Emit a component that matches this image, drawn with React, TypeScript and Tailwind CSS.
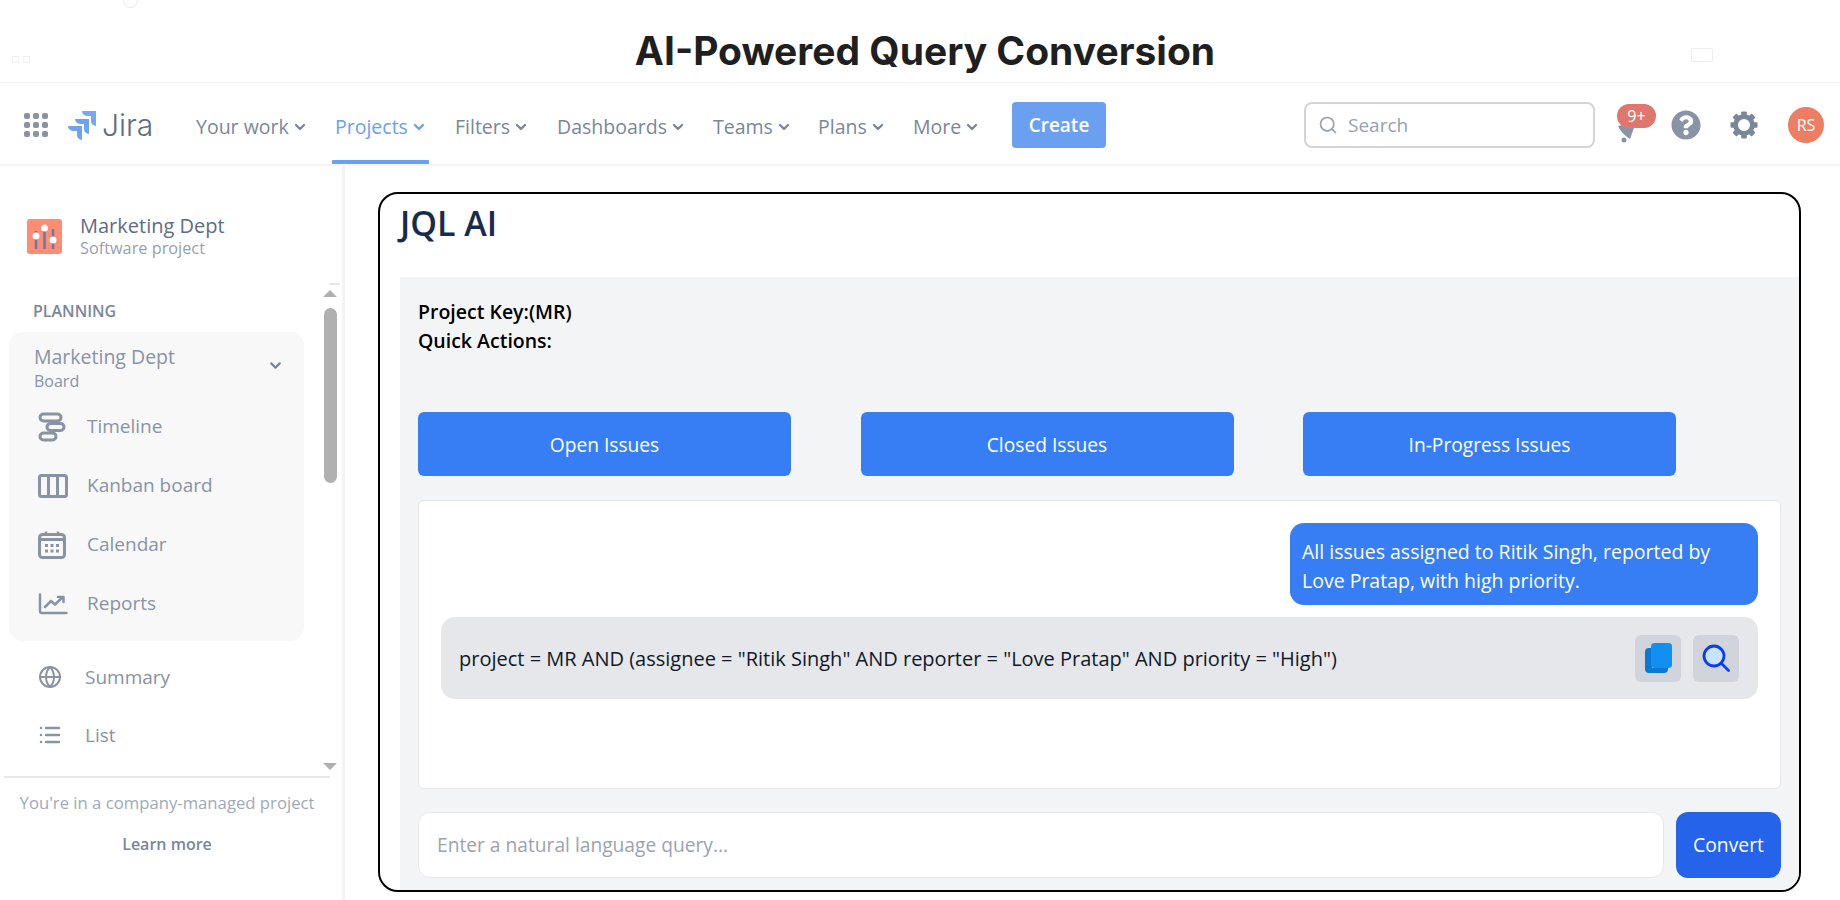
import { ChevronDown, Globe, List, Search } from "lucide-react";
import { FaQuestionCircle } from "react-icons/fa";

const NAV_ITEMS = [
  { label: "Your work", width: "w-[139px]", active: false },
  { label: "Projects", width: "w-[120px]", active: true },
  { label: "Filters", width: "w-[102px]", active: false },
  { label: "Dashboards", width: "w-[156px]", active: false },
  { label: "Teams", width: "w-[105px]", active: false },
  { label: "Plans", width: "w-[95px]", active: false },
  { label: "More", width: "w-[99px]", active: false },
];

function TimelineIcon() {
  return (
    <svg width="28" height="30" viewBox="0 0 28 30" fill="none" stroke="#8993a4" strokeWidth="3">
      <rect x="2" y="2" width="21" height="7" rx="3.5" />
      <rect x="9" y="11.5" width="17" height="7" rx="3.5" />
      <rect x="2" y="21" width="16" height="7" rx="3.5" />
    </svg>
  );
}

function KanbanIcon() {
  return (
    <svg width="30" height="24" viewBox="0 0 30 24" fill="none" stroke="#8993a4" strokeWidth="3">
      <rect x="1.5" y="1.5" width="27" height="21" rx="2" />
      <path d="M10.5 1.5v21M19.5 1.5v21" />
    </svg>
  );
}

function CalendarIcon() {
  return (
    <svg width="28" height="28" viewBox="0 0 28 28" fill="none">
      <path d="M8 0.5v4M20 0.5v4" stroke="#8993a4" strokeWidth="2.5" />
      <rect x="1.5" y="3.5" width="25" height="23" rx="3" stroke="#8993a4" strokeWidth="3" />
      <path d="M1.5 7h25v3h-25z" fill="#8993a4" />
      <g fill="#8993a4">
        <rect x="7" y="13" width="3" height="3" />
        <rect x="12.5" y="13" width="3" height="3" />
        <rect x="18" y="13" width="3" height="3" />
        <rect x="7" y="18.5" width="3" height="3" />
        <rect x="12.5" y="18.5" width="3" height="3" />
        <rect x="18" y="18.5" width="3" height="3" />
      </g>
    </svg>
  );
}

function ReportsIcon() {
  return (
    <svg width="30" height="22" viewBox="0 0 30 22" fill="none" stroke="#8993a4" strokeWidth="2.5" strokeLinecap="round" strokeLinejoin="round">
      <path d="M2 1.5v16.5a2 2 0 0 0 2 2h24.5" />
      <path d="M7 14l6-6 4 3.5 8-7.5M20 4h5.5v5" />
    </svg>
  );
}

function JiraLogo() {
  return (
    <svg width="28" height="29" viewBox="0 0 28 29" fill="#6fa3f2">
      <path d="M14 0h14v15a5 5 0 0 1-5-5V5h-4a5 5 0 0 1-5-5z" opacity="0.95" />
      <path d="M7 8h14v15a5 5 0 0 1-5-5v-5h-4a5 5 0 0 1-5-5z" />
      <path d="M0 15h14v14a5 5 0 0 1-5-5v-4H5a5 5 0 0 1-5-5z" />
    </svg>
  );
}

function ProjectIcon() {
  return (
    <svg width="35" height="35" viewBox="0 0 35 35" className="shrink-0">
      <rect width="35" height="35" rx="3" fill="#ff8c73" />
      <path d="M9 12v18M17.500 6v24M26 10v20" stroke="#5f7ea8" strokeWidth="2.500" />
      <circle cx="9" cy="17" r="3.500" fill="#fff" />
      <circle cx="17.500" cy="9" r="3.500" fill="#fff" />
      <circle cx="26" cy="21" r="3.500" fill="#fff" />
    </svg>
  );
}

function BellIcon() {
  return (
    <svg width="24" height="22" viewBox="0 0 24 22" fill="#8993a4">
      <path d="M2 5l18-4-6 17-3-2C7 13 4 9 2 5z" />
      <circle cx="8" cy="19" r="2.500" />
    </svg>
  );
}

function GearIcon() {
  const teeth = [0, 45, 90, 135, 180, 225, 270, 315];
  return (
    <svg width="28" height="30" viewBox="0 0 30 30" fill="none">
      <circle cx="15" cy="15" r="9" stroke="#7a869a" strokeWidth="5" />
      {teeth.map((deg) => (
        <rect key={deg} x="12" y="0.5" width="6" height="6" rx="1" fill="#7a869a" transform={`rotate(${deg} 15 15)`} />
      ))}
    </svg>
  );
}

function CopyIcon() {
  return (
    <svg width="28" height="30" viewBox="0 0 28 30">
      <path d="M8 5H5a4 4 0 0 0-4 4v17a4 4 0 0 0 4 4h15a4 4 0 0 0 4-4v-1H8z" fill="#0a78d7" />
      <rect x="7" y="0" width="21" height="25" rx="3.500" fill="#1190f2" />
    </svg>
  );
}

function FindIcon() {
  return (
    <svg width="28" height="28" viewBox="0 0 28 28" fill="none">
      <circle cx="12" cy="12" r="10" fill="#c8e4fd" stroke="#0a3cf0" strokeWidth="2.800" />
      <path d="M19.500 19.500l7 7" stroke="#0a3cf0" strokeWidth="2.800" strokeLinecap="round" />
    </svg>
  );
}

function SideRow({ icon, label }: { icon: React.ReactNode; label: string }) {
  return (
    <div className="flex h-[59px] items-center">
      <div className="flex w-[49px] shrink-0 justify-start">{icon}</div>
      <span className="text-[19px] text-[#8993a4]">{label}</span>
    </div>
  );
}

function Sidebar() {
  return (
    <aside className="relative w-[345px] shrink-0 border-r-[3px] border-[#f3f4f6]">
      <div className="flex h-[44px] items-center gap-[18px] pl-[27px] mt-[48px]">
        <ProjectIcon />
        <div>
          <div className="text-[20px] leading-[24px] text-[#5e6c84]">Marketing Dept</div>
          <div className="text-[16.300px] leading-[20px] text-[#97a0af]">Software project</div>
        </div>
      </div>

      <div className="mt-[41px] pl-[33px] text-[16px] leading-[24px] font-semibold text-[#7a869a]">PLANNING</div>

      <div className="ml-[9px] mt-[9px] h-[309px] w-[295px] rounded-[14px] bg-[#f8f8f9] pt-[12px]">
        <div className="relative h-[53px] pl-[25px] text-[#8993a4]">
          <div className="text-[19.500px] leading-[25px]">Marketing Dept</div>
          <div className="text-[16px] leading-[25px]">Board</div>
          <ChevronDown className="absolute right-[20px] top-[13px] h-[17px] w-[17px]" strokeWidth={3} color="#7a869a" />
        </div>
        <div className="pl-[29px]">
          <SideRow icon={<TimelineIcon />} label="Timeline" />
          <SideRow icon={<KanbanIcon />} label="Kanban board" />
          <SideRow icon={<CalendarIcon />} label="Calendar" />
          <SideRow icon={<ReportsIcon />} label="Reports" />
        </div>
      </div>

      <div className="mt-[7px] pl-[38px]">
        <div className="flex h-[58px] items-center">
          <div className="w-[47px] shrink-0"><Globe size={24} color="#8993a4" strokeWidth={2} /></div>
          <span className="text-[19px] text-[#8993a4]">Summary</span>
        </div>
        <div className="flex h-[58px] items-center">
          <div className="w-[47px] shrink-0"><List size={24} color="#8993a4" strokeWidth={2.500} /></div>
          <span className="text-[19px] text-[#8993a4]">List</span>
        </div>
      </div>

      <div className="ml-[4px] mt-[12px] h-[2px] w-[326px] bg-[#e5e7eb]" />
      <div className="mt-[13px] w-[334px] text-center text-[16.700px] leading-[24px] text-[#a0a9b8]">You're in a company-managed project</div>
      <div className="mt-[17px] w-[334px] text-center text-[16px] leading-[24px] font-semibold text-[#7a869a]">Learn more</div>

      {/* fake scrollbar, sits over the nav list */}
      <div className="absolute right-[2px] top-[117px] h-[2px] w-[11px] bg-[#e5e7eb]" />
      <div className="absolute left-[323px] top-[124px] h-0 w-0 border-x-[7px] border-b-[7px] border-x-transparent border-b-[#b0b0b0]" />
      <div className="absolute left-[324px] top-[142px] h-[175px] w-[13px] rounded-full bg-[#b0b0b0]" />
      <div className="absolute left-[323px] top-[597px] h-0 w-0 border-x-[7px] border-t-[7px] border-x-transparent border-t-[#b0b0b0]" />
    </aside>
  );
}

function Header() {
  return (
    <header className="flex h-[83px] shrink-0 items-center border-b-[2px] border-[#f3f4f6] pl-[24px] pt-[3px]">
      <div className="grid w-[24px] grid-cols-3 gap-[3px]">
        {[...Array(9)].map((_, i) => (
          <div key={i} className="h-[6px] w-[6px] rounded-[2px] bg-[#8993a4]" />
        ))}
      </div>
      <div className="ml-[20px]"><JiraLogo /></div>
      <span className="ml-[6px] w-[94px] font-['Inter',sans-serif] text-[30px] font-light text-[#5e6c84]">Jira</span>
      {NAV_ITEMS.map((item) => (
        <div key={item.label} className={`relative flex h-full items-center ${item.width}`}>
          <span className={`flex items-center gap-[3px] pt-[3px] text-[19.500px] ${item.active ? "font-medium text-[#6b9ff0]" : "text-[#7a869a]"}`}>
            {item.label}
            <ChevronDown size={16} strokeWidth={3.500} />
          </span>
          {item.active && <div className="absolute bottom-0 left-[-3px] h-[4px] w-[97px] rounded-t-[1px] bg-[#6b9ff0]" />}
        </div>
      ))}
      <button className="h-[46px] w-[94px] rounded-[4px] bg-[#6b9ff0] text-[19px] font-semibold text-white">Create</button>

      <div className="ml-[198px] flex h-[46px] w-[291px] items-center rounded-[8px] border-2 border-[#d1d5db] pl-[12px] text-[19px] text-[#97a0af]">
        <Search size={20} strokeWidth={2} />
        <span className="ml-[10px]">Search</span>
      </div>

      <div className="relative ml-[21px] h-[40px] w-[40px]">
        <div className="absolute left-[0px] top-[16px]"><BellIcon /></div>
        <div className="absolute left-[1px] top-[-1px] flex h-[24px] w-[39px] items-center justify-center rounded-full bg-[#e0776f] text-[16px] text-white">9+</div>
      </div>
      <div className="ml-[15px]"><FaQuestionCircle size={30} color="#8993a4" /></div>
      <div className="ml-[29px]"><GearIcon /></div>
      <div className="ml-[30px] flex h-[36px] w-[36px] items-center justify-center rounded-full bg-[#eb7e63] text-[16px] text-white">RS</div>
    </header>
  );
}

function JqlPanel() {
  return (
    <section className="h-[700px] w-[1423px] overflow-hidden rounded-[20px] border-2 border-black bg-white">
      <h1 className="ml-[20px] h-[83px] pt-[5px] text-[34px] leading-[48px] font-semibold text-[#172b4d]">JQL AI</h1>
      <div className="ml-[20px] h-[615px] bg-[#f3f4f6] pl-[18px] pr-[18px] pt-[20px]">
        <p className="text-[19.500px] leading-[29px] font-semibold text-black">Project Key:(MR)</p>
        <p className="text-[19.500px] leading-[29px] font-semibold text-black">Quick Actions:</p>

        <div className="mt-[57px] flex gap-[69.500px]">
          <button className="h-[64px] w-[373px] rounded-[6px] bg-[#377ef5] pt-[2px] text-[19.200px] text-white">Open Issues</button>
          <button className="h-[64px] w-[373px] rounded-[6px] bg-[#377ef5] pt-[2px] text-[19.200px] text-white">Closed Issues</button>
          <button className="h-[64px] w-[373px] rounded-[6px] bg-[#377ef5] pt-[2px] text-[19.200px] text-white">In-Progress Issues</button>
        </div>

        <div className="mt-[24px] h-[289px] rounded-[6px] border border-[#e5e7eb] bg-white px-[22px] pt-[22px]">
          <div className="ml-auto h-[82px] w-[468px] rounded-[14px] bg-[#377ef5] px-[12px] pt-[14px] text-[19.500px] leading-[29px] text-white">
            All issues assigned to Ritik Singh, reported by Love Pratap, with high priority.
          </div>
          <div className="mt-[12px] flex h-[82px] items-center justify-between rounded-[14px] bg-[#e5e7eb] pl-[18px] pr-[19px]">
            <span className="pt-[2px] text-[20px] text-[#111827]">project = MR AND (assignee = "Ritik Singh" AND reporter = "Love Pratap" AND priority = "High")</span>
            <div className="flex gap-[12px]">
              <button className="flex h-[47px] w-[46px] items-center justify-center rounded-[6px] bg-[#d1d5db]"><CopyIcon /></button>
              <button className="flex h-[47px] w-[46px] items-center justify-center rounded-[6px] bg-[#d1d5db]"><FindIcon /></button>
            </div>
          </div>
        </div>

        <div className="mt-[23px] flex h-[66px] gap-[12px]">
          <div className="flex flex-1 items-center rounded-[12px] border border-[#e5e7eb] bg-white pl-[18px] pt-[1px] text-[19.200px] text-[#9ca3af]">
            Enter a natural language query...
          </div>
          <button className="w-[105px] rounded-[12px] bg-[#2563eb] pt-[1px] text-[19.300px] text-white">Convert</button>
        </div>
      </div>
    </section>
  );
}

export default function App() {
  return (
    <div className="relative flex h-[900px] w-[1840px] flex-col overflow-hidden bg-white font-['Open_Sans',sans-serif]">
      {/* washed out bits of the original page behind the caption */}
      <div className="absolute left-[123px] top-[-7px] h-[15px] w-[15px] rounded-full border border-[#e5e7eb]" />
      <div className="absolute left-[12px] top-[56px] h-[7px] w-[7px] border border-[#f0f0f0]" />
      <div className="absolute left-[23px] top-[56px] h-[7px] w-[7px] border border-[#f0f0f0]" />
      <div className="absolute left-[1691px] top-[48px] h-[14px] w-[22px] rounded-[2px] border border-[#eeeeee]" />

      <div className="flex h-[83px] shrink-0 items-center justify-center border-b border-[#f3f4f6] pl-[10px] pt-[21px] font-['Inter',sans-serif] text-[39px] font-bold text-[#1f1f1f]">
        AI-Powered Query Conversion
      </div>
      <Header />
      <div className="flex min-h-0 flex-1">
        <Sidebar />
        <main className="pl-[33px] pt-[26px]">
          <JqlPanel />
        </main>
      </div>
    </div>
  );
}
